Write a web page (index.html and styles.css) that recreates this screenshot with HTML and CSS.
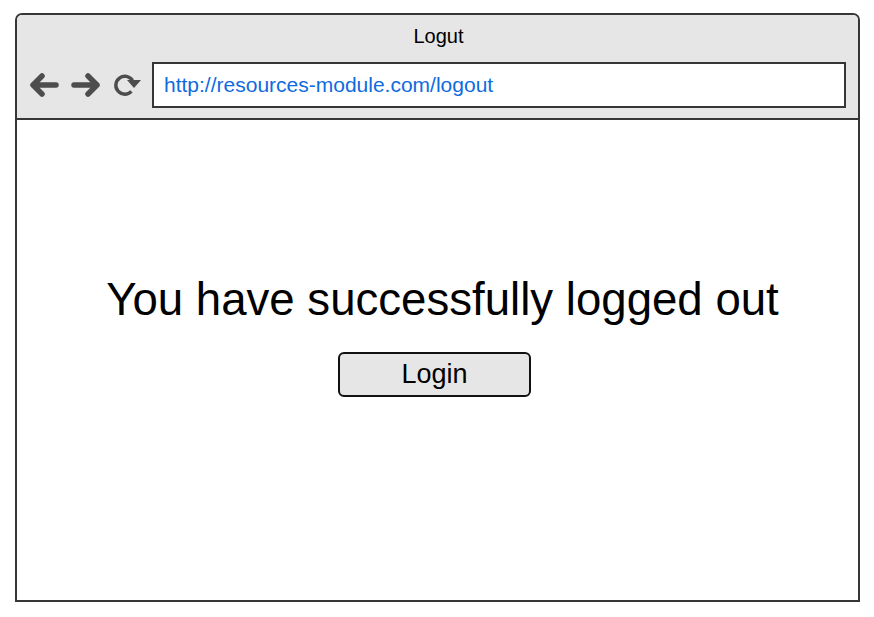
FILE: index.html
```html
<!DOCTYPE html>
<html>
<head>
<meta charset="utf-8">
<link rel="stylesheet" href="styles.css">
</head>
<body>
<div class="frame">
  <div class="chrome">
    <div class="title">Logut</div>
    <div class="toolbar">
      <div class="navs">
        <svg class="ico" width="32" height="26" viewBox="0 0 32 26"><path d="M28 13H5M14 4L5 13l9 9" fill="none" stroke="#4d4d4d" stroke-width="5.5" stroke-linecap="round" stroke-linejoin="round"/></svg>
        <svg class="ico" width="32" height="26" viewBox="0 0 32 26"><path d="M4 13h23M18 4l9 9-9 9" fill="none" stroke="#4d4d4d" stroke-width="5.5" stroke-linecap="round" stroke-linejoin="round"/></svg>
        <svg class="ico" width="30" height="26" viewBox="0 0 30 26"><path d="M19.4 19.4A9 9 0 1 1 20.5 8.5" fill="none" stroke="#4d4d4d" stroke-width="3.4"/><path d="M15 8h14l-7 8z" fill="#4d4d4d"/></svg>
      </div>
      <div class="url">http://resources-module.com/logout</div>
    </div>
  </div>
  <div class="page">
    <h1 class="msg">You have successfully logged out</h1>
    <button class="login">Login</button>
  </div>
</div>
</body>
</html>
```
FILE: styles.css
```css
html, body {
  margin: 0;
  padding: 0;
  background: #ffffff;
}
body {
  font-family: "Liberation Sans", Arial, sans-serif;
  color: #000;
}
.frame {
  margin: 13px 0 0 15px;
  width: 845px;
  height: 589px;
  box-sizing: border-box;
  border: 2px solid #363636;
  border-radius: 7px 7px 0 0;
  display: flex;
  flex-direction: column;
  overflow: hidden;
}
.chrome {
  background: #e6e6e6;
  height: 105px;
  box-sizing: border-box;
  border-bottom: 2px solid #363636;
  display: flex;
  flex-direction: column;
}
.title {
  text-align: center;
  font-size: 20px;
  line-height: 24px;
  margin-top: 9px;
  padding-left: 2px;
}
.toolbar {
  display: flex;
  align-items: center;
  margin-top: 14px;
  padding-left: 11px;
  padding-right: 12px;
}
.navs {
  display: flex;
  align-items: center;
  gap: 10px;
  margin-right: 10px;
}
.ico {
  display: block;
}
.url {
  flex: 1;
  height: 46px;
  box-sizing: border-box;
  border: 2px solid #363636;
  background: #fff;
  color: #0f6be0;
  font-size: 21px;
  line-height: 42px;
  padding-left: 10px;
}
.page {
  flex: 1;
  display: flex;
  flex-direction: column;
  align-items: center;
  background: #fff;
}
.msg {
  margin: 154px 0 0 10px;
  font-weight: normal;
  font-size: 45.6px;
  line-height: 52px;
}
.login {
  margin: 26px 6px 0 0;
  width: 193px;
  height: 45px;
  box-sizing: border-box;
  border: 2px solid #111;
  border-radius: 6px;
  background: #e6e6e6;
  font-family: "Liberation Sans", Arial, sans-serif;
  font-size: 27px;
  color: #000;
  padding: 0;
}
```
